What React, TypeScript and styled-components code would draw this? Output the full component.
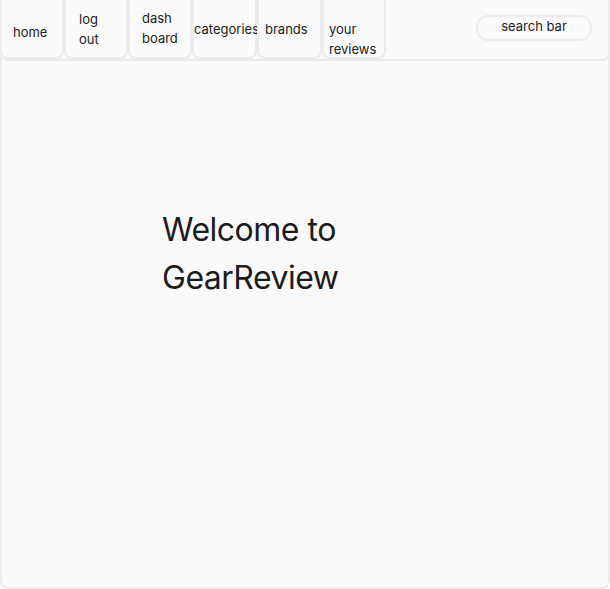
import React from "react";
import styled, { createGlobalStyle } from "styled-components";

const GlobalStyle = createGlobalStyle`
  html, body {
    margin: 0;
    padding: 0;
    background: #ffffff;
  }
  * {
    box-sizing: border-box;
  }
  body {
    font-family: Inter, "Noto Sans", sans-serif;
    color: #1c1c1c;
  }
`;

const Page = styled.div`
  width: 610px;
  height: 589px;
  border: 2px solid #ececec;
  border-top: none;
  border-radius: 0 0 8px 8px;
  background: #fafafa;
  display: flex;
  flex-direction: column;
  overflow: hidden;
`;

const Header = styled.nav`
  height: 61px;
  margin: 0 -2px;
  border-bottom: 2px solid #ebebeb;
  border-right: 2px solid #ebebeb;
  border-radius: 0 0 8px 8px;
  display: flex;
  align-items: stretch;
  flex-shrink: 0;
`;

const NavItem = styled.a<{ $top: number; $left: number; $width: number }>`
  width: ${(p) => p.$width}px;
  flex-shrink: 0;
  border: 2px solid #ebebeb;
  border-top: none;
  border-radius: 0 0 8px 8px;
  padding: ${(p) => p.$top}px 0 0 ${(p) => p.$left}px;
  font-size: 13px;
  line-height: 20px;
  color: #1c1c1c;
  white-space: nowrap;
  text-decoration: none;
  overflow: visible;
`;

const SearchBar = styled.div`
  margin: 15px 16px 0 auto;
  align-self: flex-start;
  width: 116px;
  height: 26px;
  border: 2px solid #ececec;
  border-radius: 12px;
  background: #fafafa;
  text-align: center;
  font-size: 13px;
  line-height: 18px;
  padding-top: 0;
  color: #1c1c1c;
`;

const Main = styled.main`
  flex: 1;
  padding: 145px 0 0 160px;
`;

const Title = styled.h1`
  margin: 0;
  font-size: 32px;
  line-height: 48px;
  font-weight: 400;
  letter-spacing: -0.5px;
  color: #1c1c1c;
`;

const navItems = [
  { lines: ["home"], top: 22, left: 11, width: 64 },
  { lines: ["log", "out"], top: 9, left: 13, width: 64 },
  { lines: ["dash", "board"], top: 8, left: 12, width: 64 },
  { lines: ["categories"], top: 19, left: 0, width: 65 },
  { lines: ["brands"], top: 19, left: 6, width: 65 },
  { lines: ["your", "reviews"], top: 19, left: 5, width: 64 },
];

export default function App() {
  return (
    <>
      <GlobalStyle />
      <Page>
        <Header>
          {navItems.map((item) => (
            <NavItem
              key={item.lines.join(" ")}
              href="#"
              $top={item.top}
              $left={item.left}
              $width={item.width}
            >
              {item.lines.map((l, i) => (
                <React.Fragment key={l}>
                  {i > 0 && <br />}
                  {l}
                </React.Fragment>
              ))}
            </NavItem>
          ))}
          <SearchBar>search bar</SearchBar>
        </Header>
        <Main>
          <Title>
            Welcome to
            <br />
            GearReview
          </Title>
        </Main>
      </Page>
    </>
  );
}
